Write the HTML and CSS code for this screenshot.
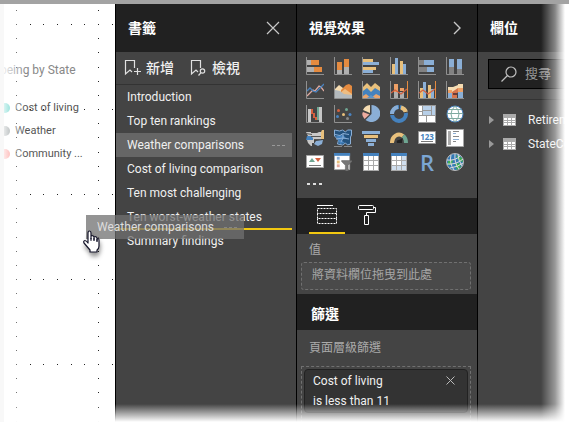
FILE: index.html
```html
<!DOCTYPE html>
<html lang="zh-Hant">
<head>
<meta charset="utf-8">
<title>書籤</title>
<link rel="stylesheet" href="styles.css">
</head>
<body>
<div class="app">
  <main class="canvas">
    <svg class="grid-dots" aria-hidden="true">
      <defs>
        <pattern id="dots" x="16" y="20" width="82" height="85" patternUnits="userSpaceOnUse">
          <path fill="#222" d="M0 0h1v1H0zM14 0h1v1h-1zM27 0h1v1h-1zM41 0h1v1h-1zM55 0h1v1h-1zM68 0h1v1h-1zM0 14h1v1H0zM0 28h1v1H0zM0 43h1v1H0zM0 57h1v1H0zM0 71h1v1H0z"/>
        </pattern>
      </defs>
      <rect width="100%" height="100%" fill="url(#dots)"/>
    </svg>
    <h2 class="chart-title">being by State</h2>
    <ul class="legend">
      <li><span class="dot teal"></span>Cost of living</li>
      <li><span class="dot gray"></span>Weather</li>
      <li><span class="dot pink"></span>Community ...</li>
    </ul>
  </main>

  <section class="panel bookmarks">
    <header class="panel-head">
      <h2>書籤</h2>
      <button class="icon-btn" aria-label="關閉"><svg width="14" height="14" viewBox="0 0 14 14"><path d="M1 1l12 12M13 1L1 13" fill="none" stroke="#c8c8c8" stroke-width="1.2"/></svg></button>
    </header>
    <div class="toolbar">
      <button class="tool"><svg width="18" height="18" viewBox="0 0 18 18" fill="none" stroke="#e0e0e0" stroke-width="1.2"><path d="M10.500 9V1.500H1.500V15l4.500-4 2 2M13.500 9v7M10 12.500h7"/></svg>新增</button>
      <button class="tool"><svg width="18" height="18" viewBox="0 0 18 18" fill="none" stroke="#e0e0e0" stroke-width="1.200"><path d="M10.500 9V1.500H1.500V15l4.500-4 2 2"/><circle cx="12.500" cy="12" r="2.200"/><path d="M11 13.600L8.500 16.500"/></svg>檢視</button>
    </div>
    <ul class="bookmark-list">
      <li>Introduction</li>
      <li>Top ten rankings</li>
      <li class="selected">Weather comparisons<button class="more" aria-label="更多選項"><svg width="14" height="3" viewBox="0 0 14 3"><path d="M0 1.500h3M5 1.500h3M10 1.500h3" stroke="#999"/></svg></button></li>
      <li>Cost of living comparison</li>
      <li>Ten most challenging</li>
      <li>Ten worst-weather states</li>
      <li class="drop-target">Summary findings</li>
    </ul>
  </section>

  <section class="panel visuals">
    <header class="panel-head">
      <h2>視覺效果</h2>
      <button class="icon-btn" aria-label="摺疊"><svg width="8" height="14" viewBox="0 0 8 14"><path d="M1 1l6 6-6 6" fill="none" stroke="#c8c8c8" stroke-width="1.400"/></svg></button>
    </header>
    <div class="gallery">
      <button aria-label="堆疊橫條圖"><svg viewBox="0 0 18 18"><path fill="#b0b0b0" d="M1 3h4v5H1zM1 10h7v5H1z"/><path fill="#e58b40" d="M5 3h8v5H5zM8 10h8v5H8z"/><path class="axis" d="M.5 0v17.500H18"/></svg></button>
      <button aria-label="堆疊直條圖"><svg viewBox="0 0 18 18"><path fill="#e58b40" d="M3 5h5v8H3zM10 2h5v8h-5z"/><path fill="#b0b0b0" d="M3 13h5v4H3zM10 10h5v7h-5z"/><path class="axis" d="M.5 0v17.500H18"/></svg></button>
      <button aria-label="群組橫條圖"><svg viewBox="0 0 18 18"><path fill="#e8c07c" d="M1 2h10v3H1zM1 10h13v3H1z"/><path fill="#8bafd6" d="M1 5h16v3H1zM1 13h10v3H1z"/><path class="axis" d="M.5 0v17.500H18"/></svg></button>
      <button aria-label="群組直條圖"><svg viewBox="0 0 18 18"><path fill="#e8c07c" d="M2 7h3v10H2zM10 4h3v13h-3z"/><path fill="#8bafd6" d="M5 1h3v16H5zM13 7h3v10h-3z"/><path class="axis" d="M.5 0v17.500H18"/></svg></button>
      <button aria-label="百分比橫條圖"><svg viewBox="0 0 18 18"><path fill="#828282" d="M1 3h5v5H1zM1 10h8v5H1z"/><path fill="#8bafd6" d="M6 3h10v5H6zM9 10h7v5H9z"/><path class="axis" d="M.5 0v17.500H18"/></svg></button>
      <button aria-label="百分比直條圖"><svg viewBox="0 0 18 18"><path fill="#8bafd6" d="M3 2h5v8H3zM11 2h5v10h-5z"/><path fill="#828282" d="M3 10h5v7H3zM11 12h5v5h-5z"/><path class="axis" d="M.5 0v17.500H18"/></svg></button>

      <button aria-label="折線圖"><svg viewBox="0 0 18 18"><path fill="none" stroke="#dfaaa0" stroke-width="1.300" d="M1 15l6-6 2 1 4-5 2 1 3 4"/><path fill="none" stroke="#4a83c0" stroke-width="1.300" d="M1 10l3-3 3 3 3 1 5-5 3-3"/><path class="axis" d="M.5 0v17.500H18"/></svg></button>
      <button aria-label="區域圖"><svg viewBox="0 0 18 18"><path fill="#f5dcb2" d="M1 8l4-4 4 3 4 5v5H1z"/><path fill="#e58b40" d="M7 9l5-5 3-1 3 2v9H7z"/><path fill="#edbd83" d="M6 12l5-4 7 5v4H6z"/><path fill="#b3b9bd" d="M1 9l5 1 4 3 8 1v3H1z"/><path class="axis" d="M.5 0v17.500H18"/></svg></button>
      <button aria-label="堆疊區域圖"><svg viewBox="0 0 18 18"><path fill="#e8c07c" d="M1 6l4-4 4 4 4-4 5 4v11H1z"/><path fill="#4582be" d="M1 10l4-3 4 4 4-4 5 3v7H1z"/><path fill="#eaa56e" d="M1 15l3-2 5 4 5-4 4 2v2H1z"/><path fill="#5c95ca" d="M5 17l4-3 4 3z"/><path class="axis" d="M.5 0v17.500H18"/></svg></button>
      <button aria-label="折線與堆疊直條圖"><svg viewBox="0 0 18 18"><path fill="#eda066" d="M4 3h4v8H4zM10 7h4v3h-4z"/><path fill="#b0b0b0" d="M4 11h4v6H4zM10 11h4v6h-4z"/><path fill="none" stroke="#d5613f" stroke-width="1.200" d="M1 12l4-3 6 4 6-5"/><path class="axis" d="M.5 0v17.500H18"/><path stroke="#e58b40" d="M17.500 0v17"/></svg></button>
      <button aria-label="折線與群組直條圖"><svg viewBox="0 0 18 18"><path fill="#e8c07c" d="M2 7h3v10H2zM10 4h3v13h-3z"/><path fill="#8bafd6" d="M5 1h3v16H5zM13 8h3v9h-3z"/><path fill="none" stroke="#d5613f" stroke-width="1.200" d="M1 12l4-3 5 4 7-5"/><path class="axis" d="M.5 0v17.500H18"/><path stroke="#e58b40" d="M17.500 0v17"/></svg></button>
      <button aria-label="功能區圖"><svg viewBox="0 0 18 18"><path fill="#f5dcb2" d="M2 6h5l5-2V3h5v5h-5L7 11H2z"/><path fill="#d5744c" d="M2 11h4l6-4h5v3h-4l-6 7H5z"/><path fill="#eda066" d="M2 9h4v3H2zM12 7h5v4h-5z"/><path fill="#8bafd6" d="M2 12h4v5H2zM12 11h5v6h-5z"/><path fill="#693b39" d="M7 12h4v2H7z"/><path fill="#d5744c" d="M7 14h4v3H7z"/><path class="axis" d="M.5 0v17.500H18"/></svg></button>

      <button aria-label="瀑布圖"><svg viewBox="0 0 18 18"><path fill="#c6c6c6" d="M2 4h3v13H2zM13 2h3v15h-3z"/><path fill="#d5613f" d="M5 4h2v5H5zM7 8h2v5H7zM9 12h2v3H9z"/><path fill="#6fa692" d="M11 2h2v13h-2z"/><path class="axis" d="M.5 0v17.500H18"/></svg></button>
      <button aria-label="散佈圖"><svg viewBox="0 0 18 18"><g fill="#4a83c0"><circle cx="3.500" cy="11.500" r="1.500"/><circle cx="16" cy="9.500" r="1.500"/></g><circle cx="4.500" cy="5.500" r="1.500" fill="#d5613f"/><circle cx="12.500" cy="4.500" r="1.500" fill="#6fa692"/><circle cx="9.500" cy="9.500" r="1.500" fill="#e8c07c"/><circle cx="13.500" cy="13.500" r="1.500" fill="#888"/><path class="axis" d="M.5 0v17.500H18"/></svg></button>
      <button aria-label="圓形圖"><svg viewBox="0 0 18 18"><path fill="#8bafd6" d="M9.500 9V0a9 8.500 0 1 1-6 15z"/><path fill="#f5dcb2" d="M8 8V0a8 8 0 0 0-7 5z"/><path fill="#edab9e" d="M7.500 9.500L1 7q-2 3 1.500 7z"/></svg></button>
      <button aria-label="環圈圖"><svg viewBox="0 0 18 18" fill="none" stroke-width="4"><circle cx="9" cy="9" r="7" stroke="#4582be"/><path stroke="#8bafd6" d="M2 9a7 7 0 0 1 6-7"/><path stroke="#e8c07c" d="M11 2.500a7 7 0 0 1 5 5"/><path stroke="#444" stroke-width="1" d="M9.500 0v5M13 8l5-1M0 9.500h4.500"/></svg></button>
      <button aria-label="樹狀圖"><svg viewBox="0 0 18 18"><path fill="#999" d="M0 0h18v18H0z"/><path fill="#fff" d="M1 1h3v5H1zM1 7h3v3H1zM1 11h7v6H1zM9 11h8v6H9z"/><path fill="#b7cfe8" d="M5 1h8v4H5zM5 6h8v4H5zM14 1h3v9h-3z"/></svg></button>
      <button aria-label="地圖"><svg viewBox="0 0 18 18"><circle cx="9" cy="9" r="8" fill="#fff" stroke="#4a83c0"/><path fill="none" stroke="#7eaaa0" d="M1 8.500h16M3 4.500h12M3 13.500h12M9 1q-8 8 0 16M9 1q8 8 0 16"/></svg></button>

      <button aria-label="區域分布圖"><svg viewBox="0 0 18 18"><path fill="#c8c8c8" d="M0 3h5v1h6l2-1h2v8H7L2 7z"/><path fill="#c8c8c8" d="M1 11h7v3H6v3H5l-3-3z"/><path fill="#4582be" d="M1 7h4l2 2v2H0z"/><path fill="#e8c07c" d="M16 1h2v9h-3V3z"/><path fill="#8bafd6" d="M10 12l7-1-1 4-4 2-4-2z"/><path fill="none" stroke="#555" d="M0 4.500l6 1M5 7.500h10M8 10.500h7"/></svg></button>
      <button aria-label="圖形地圖"><svg viewBox="0 0 18 18"><path fill="#24527d" stroke="#8bafd6" d="M.5 1l5 1 3-1 3 2 2-2h4v5l-1 2v7l-3 1-2-2-3 2-5-1 1-4-4-4z"/><path fill="#4582be" d="M2 7l7-1 3 3-5 2 4 3-5 1z"/><path fill="none" stroke="#8bafd6" d="M1 5.500l5 1 3-2 6 1M2 10l7-1 6 1M9 5v4l-2 4"/><path stroke="#888" d="M0 17.500h8M10 17.500h8"/></svg></button>
      <button aria-label="漏斗圖"><svg viewBox="0 0 18 18"><path fill="#8bafd6" d="M0 2h18v3H0zM4 10h10v3H4zM6 14h6v3H6z"/><path fill="#e8c07c" d="M2 6h14v3H2z"/></svg></button>
      <button aria-label="量測計"><svg viewBox="0 0 18 18" fill="none" stroke-width="4"><path stroke="#e8c07c" d="M2 14a7 8 0 0 1 11-7"/><path stroke="#6fa692" d="M13 7q3 2 3 7"/><path fill="#222" stroke="none" d="M7 14q-1-3 2-3l4-2-1 3 0 2z"/></svg></button>
      <button aria-label="卡片"><svg viewBox="0 0 18 18"><path fill="#fff" stroke="#999" d="M.5 2.500h17v12H.5z"/><text x="9" y="11" class="digits">123</text><path stroke="#777" d="M3 12.500h12"/></svg></button>
      <button aria-label="多列卡片"><svg viewBox="0 0 18 18"><path fill="#fff" stroke="#a5a5a5" d="M.5.500h17v17H.5z"/><path fill="#aaa" d="M2 2h3v14H2z"/><path stroke="#888" d="M7 2.500h6M7 7.500h6M7 12.500h3"/><path stroke="#8bafd6" d="M7 4.500h3M7 10.500h6"/></svg></button>

      <button aria-label="KPI"><svg viewBox="0 0 18 18"><path fill="#fff" stroke="#a5a5a5" d="M.5 2.500h17v12H.5z"/><path fill="#6fa692" d="M3 9l3-4 3 4z"/><path fill="#d5613f" d="M9 5h6l-3 4z"/><path stroke="#777" d="M3 12.500h12"/></svg></button>
      <button aria-label="交叉分析篩選器"><svg viewBox="0 0 19 19"><path fill="#fff" stroke="#aaa" d="M.5.500h16v17H.5z"/><path fill="#4582be" d="M0 0h17v3H0z"/><path fill="#8bafd6" d="M3 4h3v3H3z"/><path fill="#e8c07c" d="M3 8h3v3H3z"/><path fill="#e5a89b" d="M3 12h3v3H3z"/><path fill="#777" stroke="#555" stroke-width=".5" d="M8 8h11v1l-4 4v6h-3v-6L8 9z"/></svg></button>
      <button aria-label="資料表"><svg viewBox="0 0 18 18"><path fill="#aaa" d="M1 0h16v18H1z"/><path fill="#4582be" d="M1 0h16v3H1z"/><path fill="#fff" d="M2 3h4v4H2zM7 3h4v4H7zM12 3h4v4h-4zM2 8h4v4H2zM7 8h4v4H7zM12 8h4v4h-4zM2 13h4v4H2zM7 13h4v4H7zM12 13h4v4h-4z"/></svg></button>
      <button aria-label="矩陣"><svg viewBox="0 0 18 18"><path fill="#aaa" d="M1 0h16v18H1z"/><path fill="#4582be" d="M1 0h16v3H1z"/><path fill="#fff" d="M2 3h4v4H2zM7 3h4v4H7zM2 8h4v4H2zM7 8h4v4H7z"/><path fill="#cfdeee" d="M12 3h4v4h-4zM12 8h4v4h-4zM2 13h4v4H2zM7 13h4v4H7zM12 13h4v4h-4z"/></svg></button>
      <button class="r-visual" aria-label="R 指令碼">R</button>
      <button aria-label="ArcGIS 地圖"><svg viewBox="0 0 18 18"><circle cx="9" cy="9" r="8.500" fill="#3279b5" stroke="#bbb"/><path fill="#3cac54" d="M10 2l6 3 1 4-4-1zM2 8l5-1-1 4-4 1zM9 11l4-1 2 4-4 3z"/><path fill="none" stroke="#ddd" d="M1 7q8 1 13-4M1 11q9 1 16-5M4 15q8-1 13-5M5 2q-2 8 3 15M9 1q-1 9 4 15M12 1q0 6 4 12"/></svg></button>
      <button class="gallery-more" aria-label="更多視覺效果"><svg viewBox="0 0 18 18"><path fill="#ddd" d="M1 6h3v2H1zM7 6h3v2H7zM13 6h3v2h-3z"/></svg></button>
    </div>
    <div class="tabs">
      <button class="tab active" aria-label="欄位"><svg width="20" height="20" viewBox="0 0 20 20" fill="none" stroke="#fff"><path d="M0 .5h16"/><path stroke-dasharray="2 1" d="M.5 3.500h19v5H.5zM.5 8.500v5h19v-5M.5 13.500v5h19v-5"/></svg></button>
      <button class="tab" aria-label="格式"><svg width="20" height="20" viewBox="0 0 20 20" fill="none" stroke="#fff"><rect x="1.500" y=".5" width="15" height="4" rx="1"/><path d="M16.500 2.500h2v5h-9v3M7.500 10.500h4v9h-4z"/></svg></button>
    </div>
    <div class="well">
      <h3>值</h3>
      <div class="drop-box">將資料欄位拖曳到此處</div>
    </div>
    <h2 class="filter-head">篩選</h2>
    <div class="filters">
      <h3>頁面層級篩選</h3>
      <div class="filter-zone">
        <div class="filter-card">
          <p>Cost of living<br>is less than 11</p>
          <button class="icon-btn" aria-label="移除篩選"><svg width="9" height="9" viewBox="0 0 9 9"><path d="M.5.500l8 8M8.500.500l-8 8" fill="none" stroke="#bbb"/></svg></button>
        </div>
      </div>
    </div>
  </section>

  <section class="panel fields">
    <header class="panel-head"><h2>欄位</h2></header>
    <div class="search-row">
      <label class="search">
        <svg width="16" height="16" viewBox="0 0 16 16" fill="none" stroke="#c0c0c0" stroke-width="1.200"><circle cx="10" cy="6" r="5"/><path d="M6.500 9.500L.5 15.500"/></svg>
        <input type="search" placeholder="搜尋" aria-label="搜尋">
      </label>
    </div>
    <ul class="field-list">
      <li><svg width="5" height="8" viewBox="0 0 5 8"><path fill="#999" d="M0 0l5 4-5 4z"/></svg><svg class="table-icon" width="13" height="12" viewBox="0 0 13 12"><path fill="#aaa" d="M0 0h13v12H0z"/><path fill="#fff" d="M1 4h3v2H1zM5 4h3v2H5zM9 4h3v2H9zM1 7h3v1H1zM5 7h3v1H5zM9 7h3v1H9zM1 9h3v2H1zM5 9h3v2H5zM9 9h3v2H9z"/></svg>Retirem</li>
      <li><svg width="5" height="8" viewBox="0 0 5 8"><path fill="#999" d="M0 0l5 4-5 4z"/></svg><svg class="table-icon" width="13" height="12" viewBox="0 0 13 12"><path fill="#aaa" d="M0 0h13v12H0z"/><path fill="#fff" d="M1 4h3v2H1zM5 4h3v2H5zM9 4h3v2H9zM1 7h3v1H1zM5 7h3v1H5zM9 7h3v1H9zM1 9h3v2H1zM5 9h3v2H5zM9 9h3v2H9z"/></svg>StateCo</li>
    </ul>
  </section>

  <div class="drag-ghost">Weather comparisons<svg width="14" height="3" viewBox="0 0 14 3"><path d="M0 1.500h3M5 1.500h3M10 1.500h3" stroke="#858585"/></svg></div>
  <svg class="cursor" width="18" height="24" viewBox="0 0 18 24"><path fill="#fff" stroke="#15152a" stroke-width="1.200" stroke-linejoin="round" d="M5 13V3q0-2 1.500-2T8 3v6V6q2-1 3 1v3-3q2-1 3 1v3-2q2-1 2 1v6q0 3-2 4v2H7v-2L1 13q-1-2 1-2.500 1 0 3 2.500z"/><path stroke="#15152a" d="M8 8v3M11 8v3M14 9v3"/></svg>
  <div class="edge-fade"></div>
</div>
</body>
</html>
```
FILE: styles.css
```css
* {
  box-sizing: border-box;
}

body {
  margin: 0;
  background: #fff;
  color: #f0f0f0;
  font: 12px/24px Roboto, "Noto Sans CJK TC", sans-serif;
}

h2, h3, p, ul {
  margin: 0;
  padding: 0;
  font-size: 12px;
  font-weight: 400;
  list-style: none;
}

button {
  margin: 0;
  padding: 0;
  border: 0;
  background: none;
  color: inherit;
  font: inherit;
  cursor: pointer;
}

svg {
  display: block;
  flex: none;
}

.app {
  position: relative;
  display: grid;
  grid-template-columns: minmax(115px, 1fr) 181px 181px 92px;
  height: calc(100vh - 4px);
  border-top: 4px solid #a3a3a3;
  overflow: hidden;
}

/* Report canvas */
.canvas {
  position: relative;
  overflow: hidden;
  padding-top: 54px;
}

.grid-dots {
  position: absolute;
  inset: 0;
  width: 100%;
  height: 100%;
}

.chart-title {
  position: relative;
  color: #888;
  line-height: 24px;
}

.legend {
  position: relative;
  padding-top: 14px;
  color: #555;
  font-size: 11px;
  line-height: 23px;
}

.legend li {
  display: flex;
  align-items: center;
  gap: 5px;
  white-space: nowrap;
}

.dot {
  width: 10px;
  height: 10px;
  border-radius: 50%;
}

.teal { background: #01b8aa; }
.gray { background: #5f6b6d; }
.pink { background: #fd625e; }

/* Panels */
.panel {
  min-width: 0;
  border-left: 1px solid #000;
  background: #444;
  overflow: hidden;
}

.panel-head {
  display: flex;
  align-items: center;
  justify-content: space-between;
  height: 48px;
  padding: 0 16px 0 12px;
  background: #212121;
}

.panel-head h2,
.filter-head {
  color: #fff;
  font-size: 14px;
  font-weight: 700;
}

.toolbar {
  display: flex;
  gap: 16px;
  height: 33px;
  padding-left: 8px;
  border-bottom: 1px solid #333;
}

.tool {
  display: flex;
  align-items: center;
  gap: 4px;
  font-size: 14px;
  font-weight: 500;
}

.bookmark-list {
  padding-right: 4px;
}

.bookmark-list li {
  position: relative;
  display: flex;
  align-items: center;
  justify-content: space-between;
  height: 24px;
  padding: 0 6px 0 11px;
  line-height: 26px;
  white-space: nowrap;
}

.bookmark-list .selected {
  background: #666;
}

.drop-target::before {
  content: "";
  position: absolute;
  top: -1px;
  left: 0;
  right: 0;
  height: 2px;
  background: #f2c811;
}

/* Visualization gallery */
.gallery {
  display: grid;
  grid-template-columns: repeat(6, 18px);
  grid-auto-rows: 18px;
  gap: 6px 10px;
  height: 146px;
  padding: 5px 0 0 9px;
}

.gallery svg {
  width: 18px;
  height: 18px;
}

.axis {
  fill: none;
  stroke: #909090;
}

.digits {
  fill: #4582be;
  font: 700 8px "Open Sans", sans-serif;
  text-anchor: middle;
}

.r-visual {
  color: #7ba6d4;
  font-family: "Open Sans", sans-serif;
  font-size: 22px;
  font-weight: 600;
  line-height: 18px;
}

.tabs {
  display: flex;
  height: 36px;
  padding-left: 12px;
  background: #212121;
}

.tab {
  display: grid;
  place-items: center;
  width: 36px;
  border-bottom: 2px solid transparent;
}

.tab + .tab {
  margin-left: 4px;
}

.tab.active {
  border-color: #f2c811;
}

.well {
  height: 60px;
  padding: 4px 6px 0 4px;
}

.well h3,
.filters h3 {
  padding-left: 8px;
  color: #aaa;
}

.drop-box {
  height: 28px;
  padding-left: 10px;
  border: 1px dashed #707070;
  border-radius: 3px;
  background: #4a4a4a;
  color: #a6a6a6;
}

.filter-head {
  height: 36px;
  padding: 8px 14px;
  background: #212121;
  line-height: 24px;
}

.filters {
  padding: 6px 6px 0 4px;
}

.filter-zone {
  min-height: 72px;
  margin-top: 6px;
  padding: 2px;
  border: 1px dashed #707070;
}

.filter-card {
  display: flex;
  align-items: flex-start;
  justify-content: space-between;
  padding: 1px 12px 1px 8px;
  border: 1px solid #222;
  border-radius: 4px;
  background: #333;
  line-height: 20px;
}

.filter-card .icon-btn {
  padding-top: 5px;
}

/* Fields */
.search-row {
  height: 48px;
  padding: 7px 0 0 10px;
  border-bottom: 1px solid #333;
}

.search {
  display: flex;
  align-items: center;
  gap: 8px;
  height: 30px;
  padding-left: 12px;
  border: 1px solid #000;
  background: #212121;
}

.search input {
  flex: 1;
  min-width: 0;
  padding: 0;
  border: 0;
  background: none;
  color: #fff;
  font: inherit;
  font-size: 13px;
}

.search input::placeholder {
  color: #999;
}

.field-list {
  padding: 8px 0 0 11px;
}

.field-list li {
  display: flex;
  align-items: center;
  white-space: nowrap;
}

.table-icon {
  margin: 0 12px 0 9px;
}

/* Drag preview and pointer float over the panels */
.drag-ghost {
  position: absolute;
  top: 211px;
  left: 86px;
  display: flex;
  align-items: center;
  justify-content: space-between;
  width: 158px;
  height: 24px;
  padding: 0 6px 0 11px;
  background: rgba(112, 112, 112, 0.75);
  color: #ddd;
  line-height: 26px;
  white-space: nowrap;
}

.cursor {
  position: absolute;
  top: 226px;
  left: 83px;
  filter: drop-shadow(1px 4px 2px rgba(0, 0, 0, 0.4));
}

.edge-fade {
  position: absolute;
  inset: -4px 0 0;
  background:
    linear-gradient(to right, #f8f8f8 4px, transparent 4px),
    linear-gradient(to right, #fff 0, transparent 26px),
    linear-gradient(to left, #fff 4px, rgba(255, 255, 255, 0.45) 14px, transparent 28px),
    linear-gradient(to top, #fff 0, transparent 18px);
  pointer-events: none;
}
```
